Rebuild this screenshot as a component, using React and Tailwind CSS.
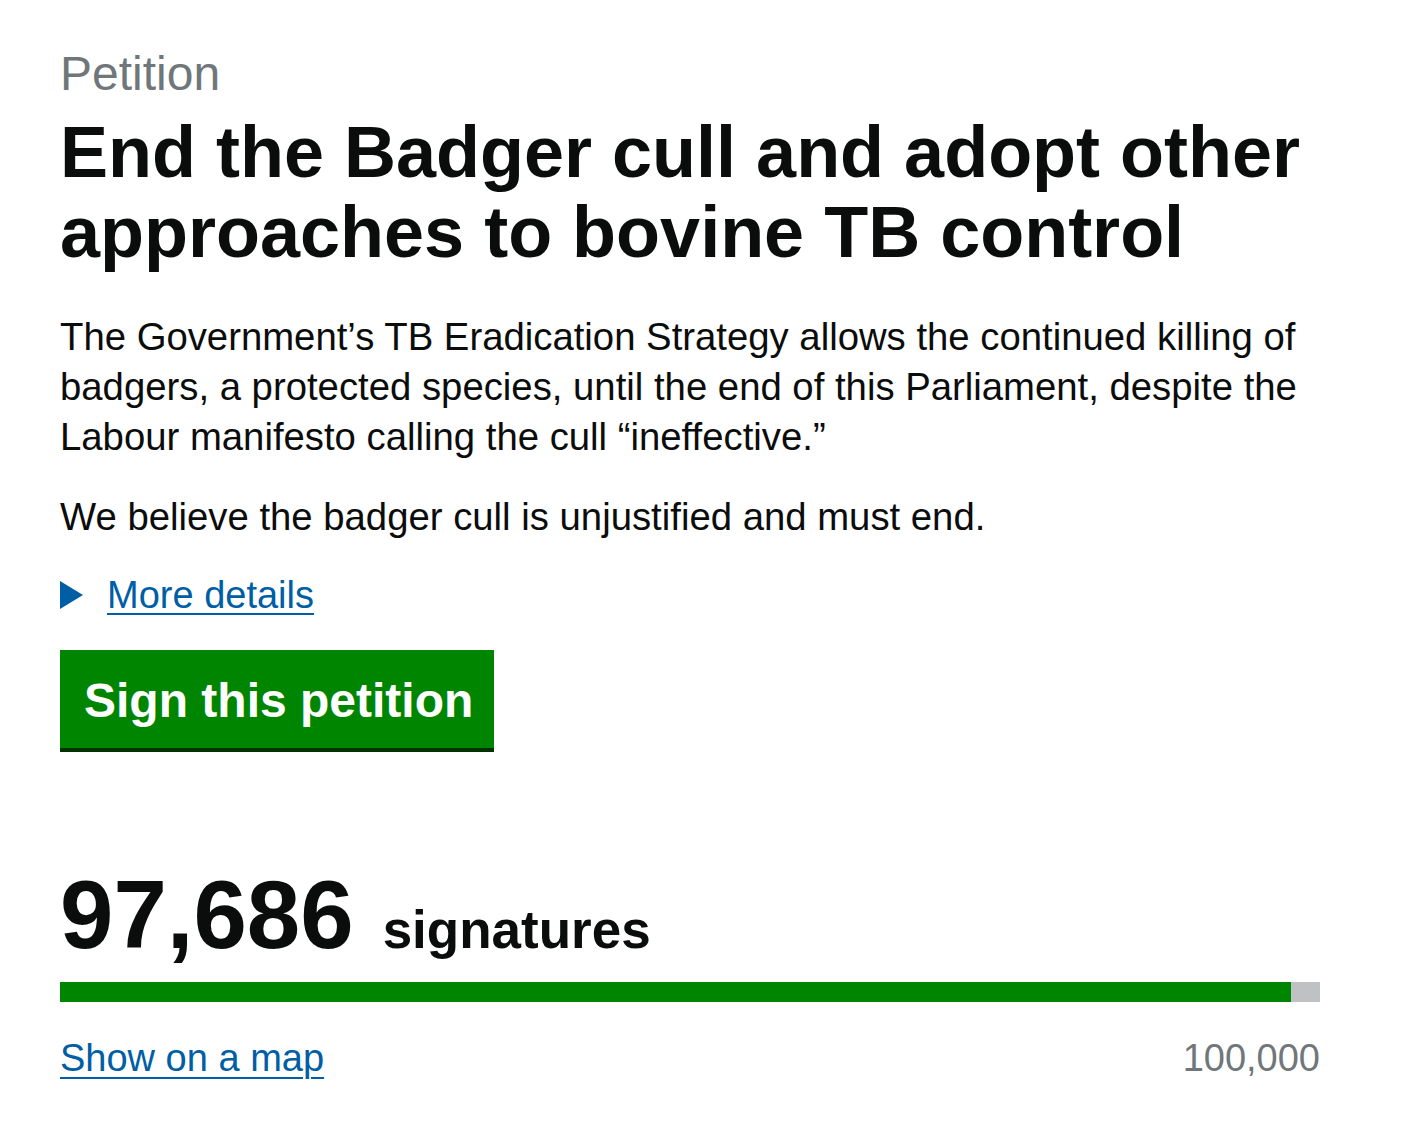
export default function App() {
  const signatures = 97686
  const target = 100000
  const pct = (signatures / target) * 100

  return (
    <div className="bg-white min-h-screen font-['Liberation_Sans',Arial,sans-serif] text-[#0b0c0c]">
      <div className="px-[60px] pt-[44px] pb-10 max-w-[1380px]">
        <span className="block text-[48px] leading-[60px] text-[#6f777b]">Petition</span>
        <h1 className="mt-[8px] text-[72px] leading-[80px] font-bold">
          End the Badger cull and adopt other approaches to bovine TB control
        </h1>

        <p className="mt-[40px] text-[38.3px] leading-[50px]">
          The Government’s TB Eradication Strategy allows the continued killing of badgers, a protected species, until the end of this Parliament, despite the Labour manifesto calling the cull “ineffective.”
        </p>
        <p className="mt-[30px] text-[38.3px] leading-[50px]">
          We believe the badger cull is unjustified and must end.
        </p>

        <div className="mt-[28px] flex items-center gap-[24px] text-[38px] leading-[50px]">
          <svg width="23" height="28" viewBox="0 0 23 28" className="shrink-0">
            <polygon points="0,0 23,14 0,28" fill="#005ea5" />
          </svg>
          <a href="#" className="text-[#005ea5] underline decoration-2 underline-offset-[5px]">More details</a>
        </div>

        <button className="mt-[30px] block bg-[#008500] text-white font-bold text-[48px] leading-[48px] pl-[24px] pr-[21px] pt-[27px] pb-[23px] shadow-[0_4px_0_#003300]">
          Sign this petition
        </button>

        <div className="mt-[117px] flex items-baseline gap-[29px]">
          <span className="text-[96px] leading-[100px] font-bold">97,686</span>
          <span className="text-[53px] leading-[60px] font-bold">signatures</span>
        </div>

        <div className="mt-[17px] h-[20px] w-[1260px] bg-[#bfc1c3]">
          <div className="h-full bg-[#008500]" style={{ width: `${pct}%` }} />
        </div>

        <div className="mt-[31px] w-[1260px] flex justify-between text-[38px] leading-[50px]">
          <a href="#" className="text-[#005ea5] underline decoration-2 underline-offset-[6px]">Show on a map</a>
          <span className="text-[#6f777b]">100,000</span>
        </div>
      </div>
    </div>
  )
}
